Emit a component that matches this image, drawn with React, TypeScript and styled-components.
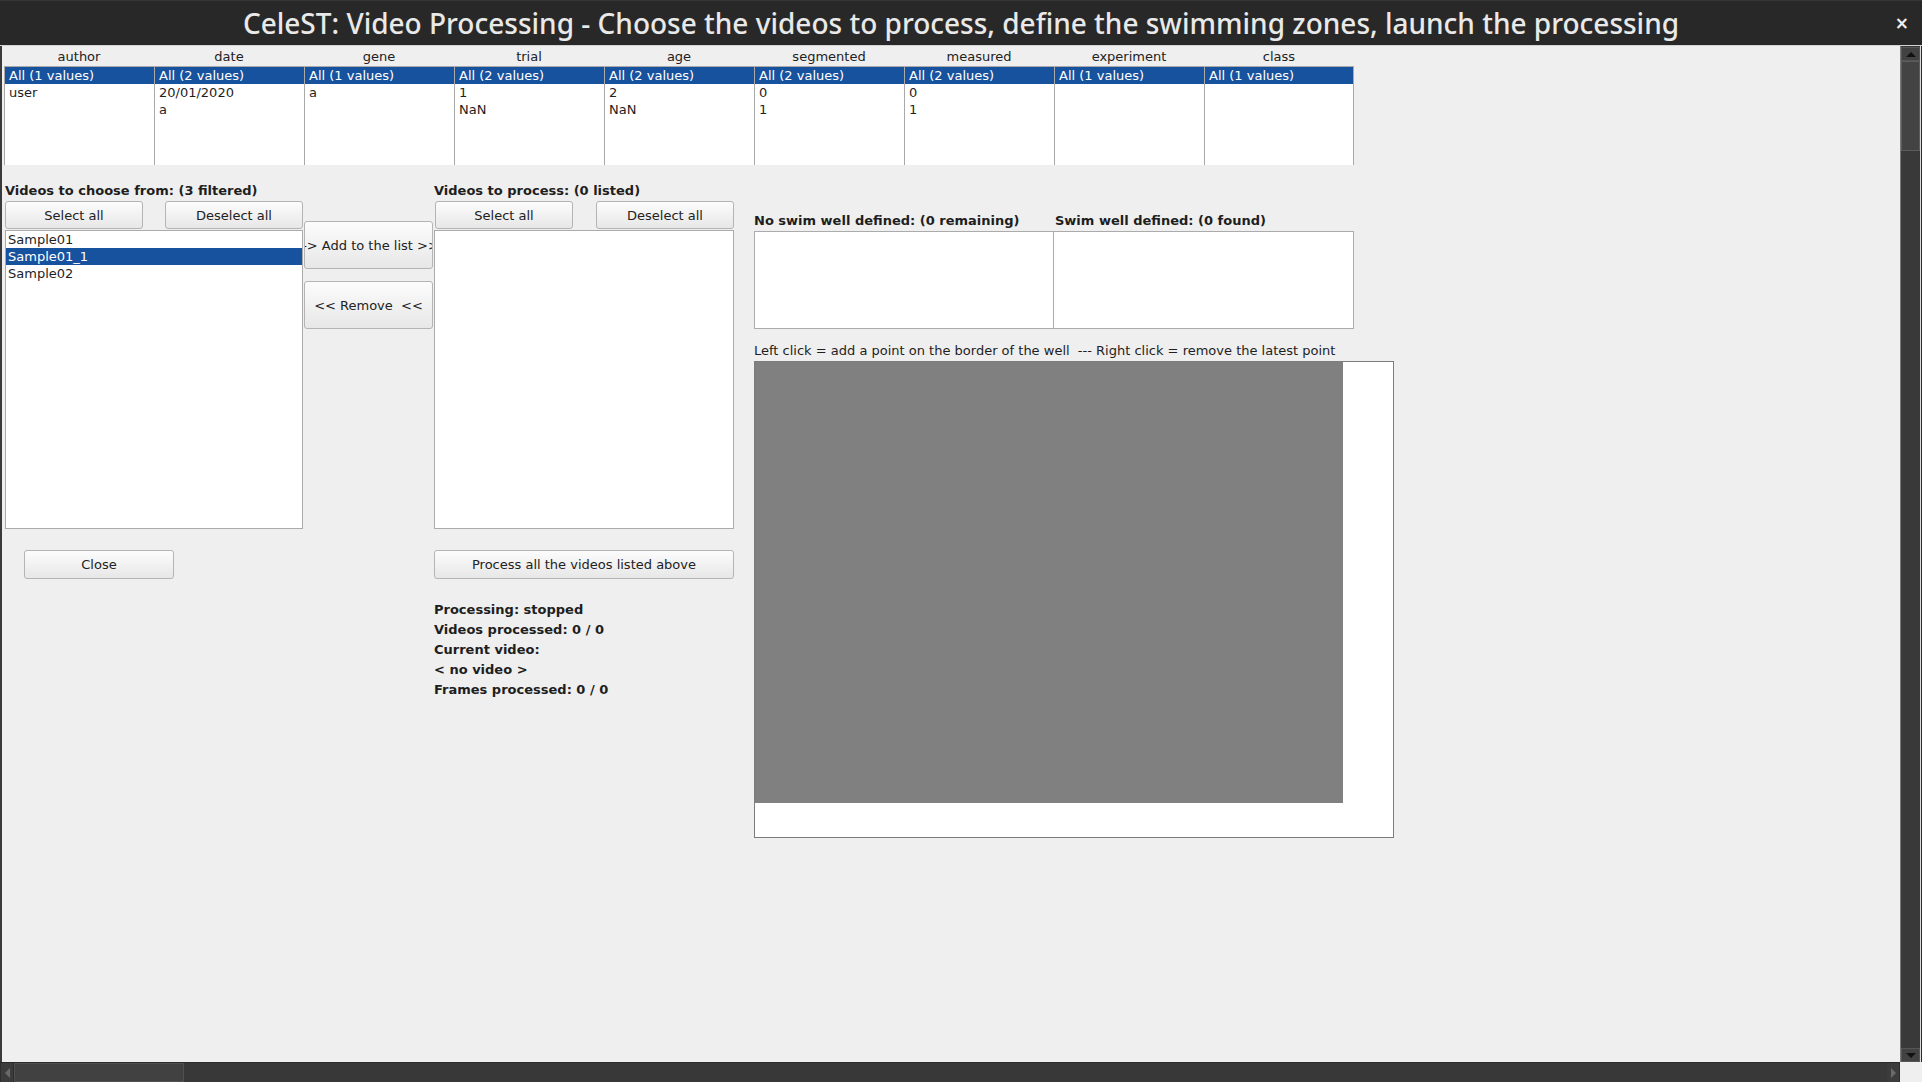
import React from "react";
import styled, { createGlobalStyle } from "styled-components";

const GlobalStyle = createGlobalStyle`
  html, body {
    margin: 0;
    padding: 0;
    background: #efefef;
    overflow: hidden;
  }
  body {
    font-family: "DejaVu Sans", sans-serif;
    font-size: 13px;
    color: #1e1e1e;
  }
  * { box-sizing: border-box; }
`;

const Window = styled.div`
  width: 1922px;
  height: 1082px;
  display: flex;
  flex-direction: column;
  background: #efefef;
`;

const TitleBar = styled.div`
  flex: none;
  height: 46px;
  background: #282828;
  border-top: 1px solid #363636;
  border-bottom: 1px solid #d4d4d4;
  display: grid;
  grid-template-columns: 1fr auto 1fr;
  align-items: center;
`;

const TitleText = styled.div`
  grid-column: 2;
  font-family: "Noto Sans", "DejaVu Sans", sans-serif;
  font-size: 28px;
  font-weight: 500;
  color: #e9e9e9;
  white-space: nowrap;
  line-height: 44px;
`;

const CloseGlyph = styled.div`
  grid-column: 3;
  justify-self: end;
  margin-right: 13px;
  color: #f0f0f0;
  font-family: "DejaVu Sans", sans-serif;
  font-size: 17px;
  font-weight: bold;
  line-height: 44px;
`;

const Frame = styled.div`
  flex: 1;
  min-height: 0;
  display: flex;
`;

const Content = styled.div`
  flex: 1;
  min-width: 0;
  border-left: 2px solid #3a3a3a;
  padding: 2px 0 0 2px;
  display: flex;
  flex-direction: column;
`;

const VScroll = styled.div`
  flex: none;
  width: 20px;
  display: flex;
  flex-direction: column;
  background: #393939;
  border-left: 1px solid #7a7a7a;
  padding-top: 1px;
`;

const ScrollButton = styled.div<{ $h: number }>`
  flex: none;
  height: ${(p) => p.$h}px;
  background: #424242;
  border: 1px solid #555;
  display: flex;
  align-items: center;
  justify-content: center;
`;

const VThumb = styled.div`
  flex: none;
  height: 90px;
  background: #434343;
  border: 1px solid #5c5c5c;
`;

const Track = styled.div`
  flex: 1;
`;

const RightEdge = styled.div`
  flex: none;
  width: 2px;
  background: #2a2a2a;
  border-left: 1px solid #dcdcdc;
`;

const BottomRow = styled.div`
  flex: none;
  height: 20px;
  display: flex;
`;

const HTrack = styled.div`
  width: 1900px;
  height: 20px;
  display: flex;
  background: #383838;
  border-top: 1px solid #2a2a2a;
  border-left: 1px solid #2e2e2e;
`;

const HButton = styled.div`
  flex: none;
  width: 13px;
  display: flex;
  align-items: center;
  justify-content: center;
  background: #3c3c3c;
  border-right: 1px solid #2c2c2c;
`;

const HThumb = styled.div`
  flex: none;
  width: 170px;
  background: #414141;
  border: 1px solid #505050;
`;

const Corner = styled.div`
  flex: 1;
  background: #efefef;
`;

/* ---- filter table ---- */

const FilterTable = styled.div`
  display: grid;
  grid-template-columns: repeat(9, 150px);
  width: 1351px;
`;

const FilterColumn = styled.div`
  display: flex;
  flex-direction: column;
`;

const FilterHeader = styled.div`
  height: 18px;
  line-height: 18px;
  text-align: center;
  color: #222;
`;

const FilterList = styled.div<{ $last?: boolean }>`
  height: 99px;
  background: #fff;
  border-left: 1px solid #a9a9a9;
  border-top: 1px solid #a9a9a9;
  border-right: ${(p) => (p.$last ? "1px solid #a9a9a9" : "none")};
  overflow: hidden;
`;

const ListRow = styled.div<{ $selected?: boolean; $pad: number }>`
  height: 17px;
  line-height: 17px;
  padding-left: ${(p) => p.$pad}px;
  white-space: nowrap;
  background: ${(p) => (p.$selected ? "#17529e" : "transparent")};
  color: ${(p) => (p.$selected ? "#ffffff" : "#1e1e1e")};
`;

/* ---- main area ---- */

const MainArea = styled.div`
  display: flex;
  align-items: flex-start;
  margin-top: 17px;
  padding-left: 1px;
`;

const Panel = styled.div<{ $w: number }>`
  flex: none;
  width: ${(p) => p.$w}px;
  display: flex;
  flex-direction: column;
`;

const SectionLabel = styled.div<{ $pt?: number }>`
  font-weight: bold;
  height: ${(p) => 16 + (p.$pt ?? 0)}px;
  padding-top: ${(p) => p.$pt ?? 0}px;
  line-height: 16px;
  white-space: nowrap;
`;

const ButtonRow = styled.div<{ $w: number; $pl?: number }>`
  margin-top: 2px;
  width: ${(p) => p.$w}px;
  padding-left: ${(p) => p.$pl ?? 0}px;
  display: flex;
  justify-content: space-between;
`;

const ActionButton = styled.button<{ $w: number; $h: number; $shift?: number }>`
  flex: none;
  width: ${(p) => p.$w}px;
  height: ${(p) => p.$h}px;
  padding: 0 0 0 ${(p) => p.$shift ?? 0}px;
  border: 1px solid #b4b4b4;
  border-radius: 3px;
  background: linear-gradient(#fcfcfc, #e7e7e7);
  font-family: "DejaVu Sans", sans-serif;
  font-size: 13px;
  color: #222;
  display: flex;
  align-items: center;
  justify-content: center;
  overflow: hidden;
  white-space: nowrap;
  cursor: default;
`;

const VideoList = styled.div<{ $w: number }>`
  margin-top: 1px;
  width: ${(p) => p.$w}px;
  height: 299px;
  background: #fff;
  border: 1px solid #ababab;
  overflow: hidden;
`;

const CloseRow = styled.div`
  margin-top: 21px;
  padding-left: 19px;
`;

const ProcessRow = styled.div`
  margin-top: 21px;
`;

const MidPanel = styled.div`
  flex: none;
  width: 130px;
  padding-top: 39px;
  display: flex;
  flex-direction: column;
  gap: 12px;
`;

const StatusBlock = styled.div`
  margin-top: 21px;
  font-weight: bold;
  line-height: 20px;
  white-space: nowrap;
`;

const SwimPanel = styled.div`
  flex: none;
  margin-left: 20px;
  display: flex;
  flex-direction: column;
`;

const SwimLabels = styled.div`
  margin-top: 31px;
  display: grid;
  grid-template-columns: 301px 300px;
`;

const SwimBoxes = styled.div`
  margin-top: 2px;
  display: flex;
`;

const SwimBox = styled.div<{ $first?: boolean }>`
  width: 300px;
  height: 98px;
  background: #fff;
  border: 1px solid #ababab;
  border-left: ${(p) => (p.$first ? "1px solid #ababab" : "none")};
`;

const Instruction = styled.div`
  margin-top: 14px;
  height: 16px;
  line-height: 16px;
  white-space: pre;
`;

const Canvas = styled.div`
  margin-top: 2px;
  width: 640px;
  height: 477px;
  background: #fff;
  border: 1px solid #7c7c7c;
`;

const CanvasImage = styled.div`
  width: 588px;
  height: 441px;
  background: #808080;
`;

const Tri = ({ dir, color }: { dir: "up" | "down" | "left" | "right"; color: string }) => {
  const pts: Record<string, string> = {
    up: "0,5 5,0 10,5",
    down: "0,0 10,0 5,5",
    left: "5,0 5,10 0,5",
    right: "0,0 5,5 0,10",
  };
  const vertical = dir === "up" || dir === "down";
  return (
    <svg width={vertical ? 10 : 5} height={vertical ? 5 : 10} viewBox={vertical ? "0 0 10 5" : "0 0 5 10"}>
      <polygon points={pts[dir]} fill={color} />
    </svg>
  );
};

const filters = [
  { name: "author", rows: ["All (1 values)", "user"] },
  { name: "date", rows: ["All (2 values)", "20/01/2020", "a"] },
  { name: "gene", rows: ["All (1 values)", "a"] },
  { name: "trial", rows: ["All (2 values)", "1", "NaN"] },
  { name: "age", rows: ["All (2 values)", "2", "NaN"] },
  { name: "segmented", rows: ["All (2 values)", "0", "1"] },
  { name: "measured", rows: ["All (2 values)", "0", "1"] },
  { name: "experiment", rows: ["All (1 values)"] },
  { name: "class", rows: ["All (1 values)"] },
];

const videos = ["Sample01", "Sample01_1", "Sample02"];

export default function App() {
  return (
    <>
      <GlobalStyle />
      <Window>
        <TitleBar>
          <TitleText>
            CeleST: Video Processing - Choose the videos to process, define the swimming zones, launch the processing
          </TitleText>
          <CloseGlyph>×</CloseGlyph>
        </TitleBar>
        <Frame>
          <Content>
            <FilterTable>
              {filters.map((f, i) => (
                <FilterColumn key={f.name}>
                  <FilterHeader>{f.name}</FilterHeader>
                  <FilterList $last={i === filters.length - 1}>
                    {f.rows.map((r, j) => (
                      <ListRow key={j} $selected={j === 0} $pad={4}>
                        {r}
                      </ListRow>
                    ))}
                  </FilterList>
                </FilterColumn>
              ))}
            </FilterTable>

            <MainArea>
              <Panel $w={299}>
                <SectionLabel $pt={1}>Videos to choose from: (3 filtered)</SectionLabel>
                <ButtonRow $w={298}>
                  <ActionButton $w={138} $h={28}>Select all</ActionButton>
                  <ActionButton $w={138} $h={28}>Deselect all</ActionButton>
                </ButtonRow>
                <VideoList $w={298}>
                  {videos.map((v) => (
                    <ListRow key={v} $selected={v === "Sample01_1"} $pad={2}>
                      {v}
                    </ListRow>
                  ))}
                </VideoList>
                <CloseRow>
                  <ActionButton $w={150} $h={29}>Close</ActionButton>
                </CloseRow>
              </Panel>

              <MidPanel>
                <ActionButton $w={129} $h={48} $shift={4}>-&gt; Add to the list &gt;&gt;</ActionButton>
                <ActionButton $w={129} $h={48}>&lt;&lt; Remove&nbsp;&nbsp;&lt;&lt;</ActionButton>
              </MidPanel>

              <Panel $w={300}>
                <SectionLabel $pt={1}>Videos to process: (0 listed)</SectionLabel>
                <ButtonRow $w={300} $pl={1}>
                  <ActionButton $w={138} $h={28}>Select all</ActionButton>
                  <ActionButton $w={138} $h={28}>Deselect all</ActionButton>
                </ButtonRow>
                <VideoList $w={300} />
                <ProcessRow>
                  <ActionButton $w={300} $h={29}>Process all the videos listed above</ActionButton>
                </ProcessRow>
                <StatusBlock>
                  <div>Processing: stopped</div>
                  <div>Videos processed: 0 / 0</div>
                  <div>Current video:</div>
                  <div>&lt; no video &gt;</div>
                  <div>Frames processed: 0 / 0</div>
                </StatusBlock>
              </Panel>

              <SwimPanel>
                <SwimLabels>
                  <SectionLabel>No swim well defined: (0 remaining)</SectionLabel>
                  <SectionLabel>Swim well defined: (0 found)</SectionLabel>
                </SwimLabels>
                <SwimBoxes>
                  <SwimBox $first />
                  <SwimBox />
                </SwimBoxes>
                <Instruction>
                  Left click = add a point on the border of the well  --- Right click = remove the latest point
                </Instruction>
                <Canvas>
                  <CanvasImage />
                </Canvas>
              </SwimPanel>
            </MainArea>
          </Content>
          <VScroll>
            <ScrollButton $h={14}>
              <Tri dir="up" color="#111" />
            </ScrollButton>
            <VThumb />
            <Track />
            <ScrollButton $h={14}>
              <Tri dir="down" color="#111" />
            </ScrollButton>
          </VScroll>
          <RightEdge />
        </Frame>
        <BottomRow>
          <HTrack>
            <HButton>
              <Tri dir="left" color="#6a6a6a" />
            </HButton>
            <HThumb />
            <Track />
            <HButton>
              <Tri dir="right" color="#6a6a6a" />
            </HButton>
          </HTrack>
          <Corner />
        </BottomRow>
      </Window>
    </>
  );
}
